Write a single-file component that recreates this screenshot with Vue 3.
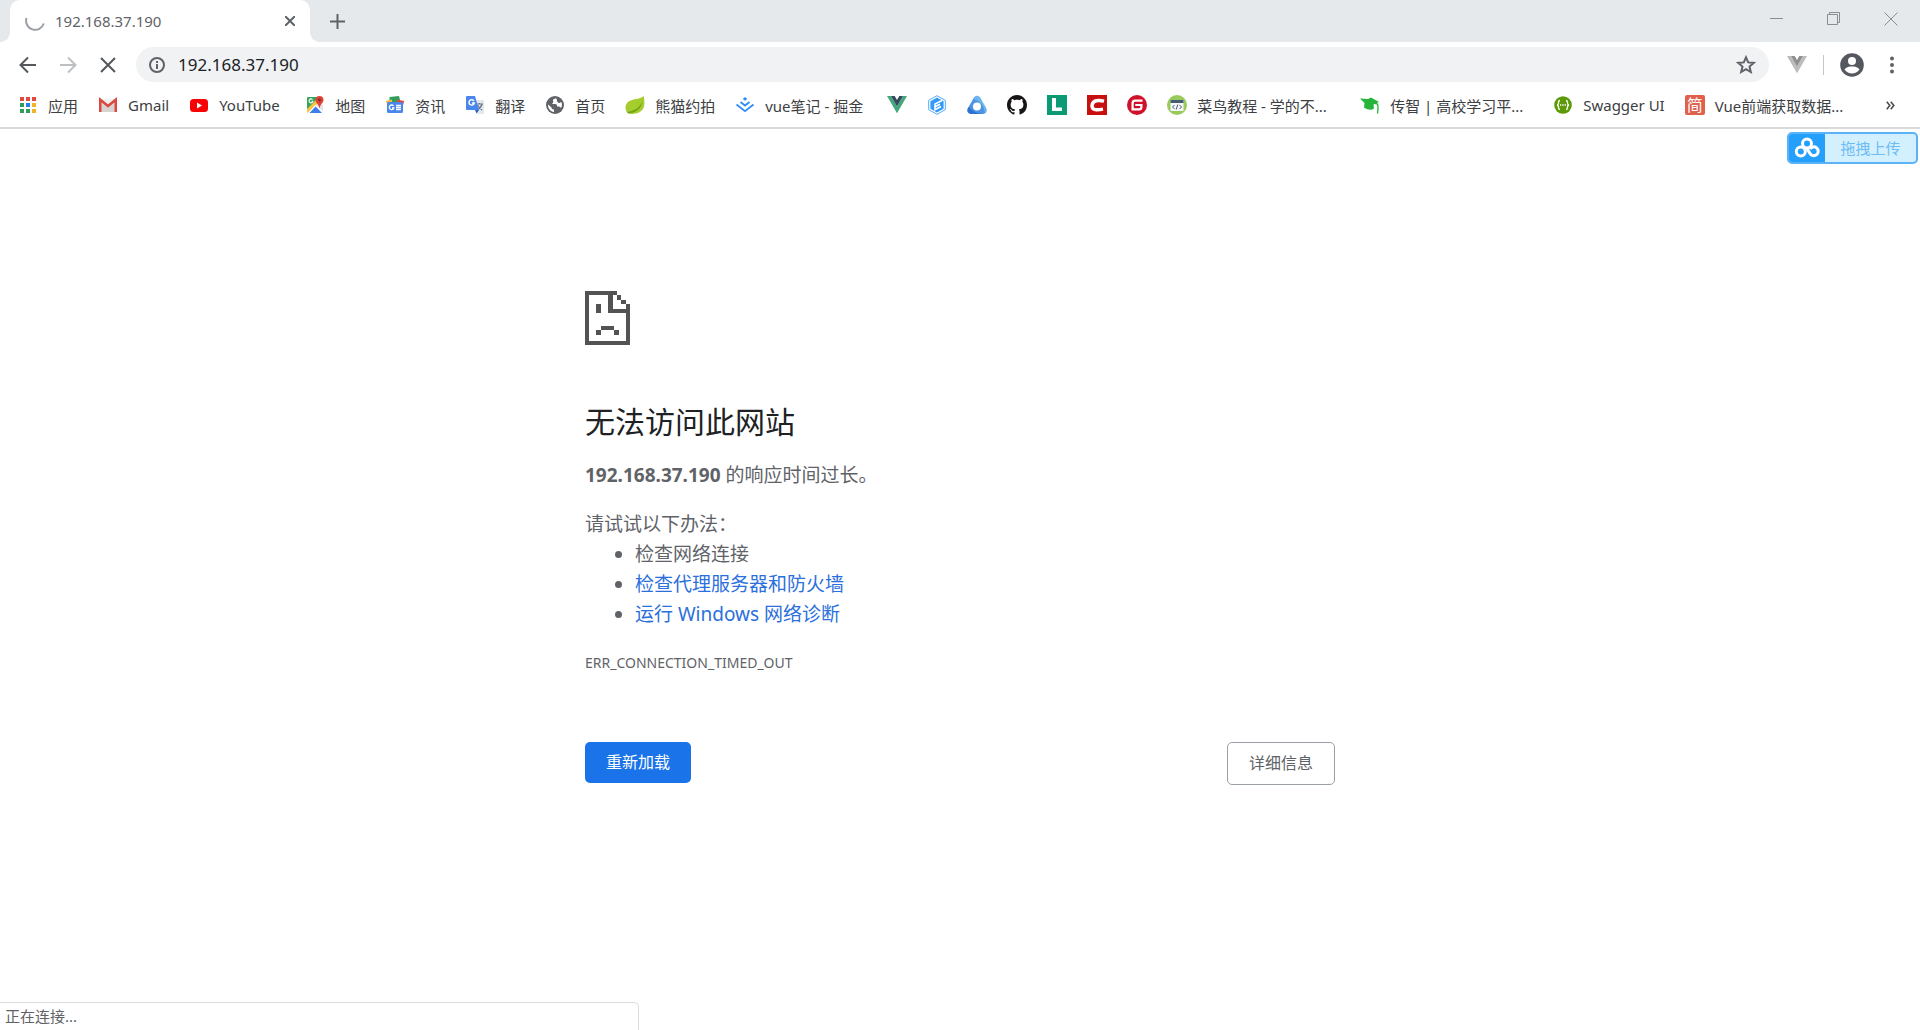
<script setup>
import { ref } from 'vue'

const address = ref('192.168.37.190')
</script>

<template>
  <div class="browser">
    <header class="chrome">
      <div class="tab-strip">
        <div class="tab">
          <svg class="spinner" width="20" height="20" viewBox="0 0 20 20" fill="none" stroke="#9aa0a6" stroke-width="2"><path d="M1.500 7 A9 9 0 0 0 18.800 12.500" /></svg>
          <span class="tab-title">192.168.37.190</span>
          <button class="plain tab-close" aria-label="关闭标签页">
            <svg width="10" height="10" viewBox="0 0 10 10" stroke="#5f6368" stroke-width="2"><path d="M0 0L10 10M10 0L0 10" /></svg>
          </button>
        </div>
        <button class="plain new-tab" aria-label="新标签页">
          <svg width="15" height="15" viewBox="0 0 15 15" stroke="#5f6368" stroke-width="2"><path d="M7.5 0V15M0 7.5H15" /></svg>
        </button>
        <div class="window-controls">
          <button class="plain control" aria-label="最小化">
            <svg width="14" height="14" viewBox="0 0 14 14" stroke="#8a8d91" fill="none"><path d="M0 6.500H13" /></svg>
          </button>
          <button class="plain control" aria-label="还原">
            <svg width="14" height="14" viewBox="0 0 14 14" stroke="#8a8d91" fill="none"><path d="M.5 2.500H10.500V12.500H.5ZM2.500 2.500V.5H12.500V10.500H10.500" /></svg>
          </button>
          <button class="plain control" aria-label="关闭">
            <svg width="14" height="14" viewBox="0 0 14 14" stroke="#8a8d91" fill="none"><path d="M.5 .5L13.500 13.500M13.500 .5L.5 13.500" /></svg>
          </button>
        </div>
      </div>

      <div class="toolbar">
        <button class="plain nav" aria-label="后退">
          <svg width="18" height="18" viewBox="0 0 18 18" stroke="#55585c" stroke-width="2" fill="none"><path d="M17 9H2M9 1.500L1.500 9L9 16.500" /></svg>
        </button>
        <button class="plain nav" aria-label="前进">
          <svg width="18" height="18" viewBox="0 0 18 18" stroke="#bdc0c3" stroke-width="2" fill="none"><path d="M1 9H16M9 1.500L16.500 9L9 16.500" /></svg>
        </button>
        <button class="plain nav" aria-label="停止">
          <svg width="16" height="16" viewBox="0 0 16 16" stroke="#55585c" stroke-width="2" fill="none"><path d="M1 1L15 15M15 1L1 15" /></svg>
        </button>
        <div class="omnibox">
          <svg width="18" height="18" viewBox="0 0 18 18" fill="none" stroke="#5f6368" stroke-width="2"><circle cx="9" cy="9" r="7" /><path d="M9 8V13M9 5V7" /></svg>
          <input v-model="address" class="address" type="text" aria-label="地址" />
          <button class="plain" aria-label="收藏">
            <svg width="20" height="20" viewBox="0 0 20 20" fill="none" stroke="#5f6368" stroke-width="2"><path d="M10 2.300L12.200 7.400L17.700 7.900L13.500 11.600L14.800 17L10 14.100L5.200 17L6.500 11.600L2.300 7.900L7.800 7.400Z" /></svg>
          </button>
        </div>
        <button class="plain extension" aria-label="Vue.js devtools">
          <svg width="20" height="18" viewBox="0 0 20 18"><path fill="#bcbcbc" d="M0 0H4L10 10.400L16 0H20L10 17.300Z" /><path fill="#8f8f8f" d="M4 0H7.700L10 4L12.300 0H16L10 10.400Z" /></svg>
        </button>
        <span class="divider"></span>
        <button class="plain avatar" aria-label="用户">
          <svg width="24" height="24" viewBox="0 0 24 24"><circle cx="12" cy="12" r="11.800" fill="#55585e" /><circle cx="12" cy="8" r="4" fill="#fff" /><path fill="#fff" d="M4.500 16.500C6 14 9.500 13.500 12 13.500S18 14 19.500 16.500C17.500 19.300 15 20.500 12 20.500S6.500 19.300 4.500 16.500Z" /></svg>
        </button>
        <button class="plain menu" aria-label="菜单">
          <svg width="20" height="18" viewBox="0 0 20 18" fill="#5f6368"><circle cx="10" cy="2.500" r="2" /><circle cx="10" cy="9" r="2" /><circle cx="10" cy="15.500" r="2" /></svg>
        </button>
      </div>

      <nav class="bookmarks">
        <a class="bookmark" href="#">
          <svg width="20" height="20" viewBox="0 0 20 20"><path fill="#e04a3f" d="M2 2h4v4H2zM8 2h4v4H8zM14 2h4v4h-4z" /><path fill="#2f9e58" d="M2 8h4v4H2zM2 14h4v4H2z" /><path fill="#2a7fe8" d="M8 8h4v4H8z" /><path fill="#2f9e58" d="M8 14h4v4H8z" /><path fill="#f2b32c" d="M14 8h4v4h-4zM14 14h4v4h-4z" /></svg>
          <span>应用</span>
        </a>
        <a class="bookmark" href="#">
          <svg width="20" height="20" viewBox="0 0 20 20"><path fill="#f3f1f0" d="M1 4H19V17H1Z" /><path fill="#d8d4d2" d="M4 17V8L10 13L16 8V17Z" /><path fill="none" stroke="#d94a43" stroke-width="2.600" d="M2.300 17V4.800L10 11L17.700 4.800V17" /></svg>
          <span>Gmail</span>
        </a>
        <a class="bookmark" href="#">
          <svg width="20" height="20" viewBox="0 0 20 20"><rect x="1" y="4" width="18" height="13" rx="3.500" fill="#f80303" /><path fill="#fff" d="M8 7.500L13 10.500L8 13.500Z" /></svg>
          <span class="youtube">YouTube</span>
        </a>
        <a class="bookmark" href="#">
          <svg width="20" height="20" viewBox="0 0 20 20"><path fill="#35a35a" d="M3 2H14L3 16Q2 16 2 14V3Q2 2 3 2Z" /><path fill="#f6c544" d="M2 14L12 4L14 7L4 18H3Q2 18 2 16Z" /><path fill="#e2e4e6" d="M13 8L18 10V17Q18 18 17 17L10 11Z" /><path fill="#3f7ee8" d="M4 18L10.500 11L17 18Z" /><path stroke="#fff" stroke-width="1.200" d="M3.500 18L10.500 10.500L18 17.500" fill="none" /><path d="M7.500 4.500A2 2 0 1 0 8 6.200H6.500" fill="none" stroke="#fff" stroke-width="1.100" /><path fill="#df4438" d="M14.500 1a4 4 0 0 1 4 4C18.500 8 15.500 8.500 14.500 13.500C13.500 8.500 10.500 8 10.500 5a4 4 0 0 1 4-4Z" /><circle cx="14.500" cy="5" r="1.400" fill="#8c241d" /></svg>
          <span>地图</span>
        </a>
        <a class="bookmark" href="#">
          <svg width="20" height="20" viewBox="0 0 20 20"><path fill="#2f9e58" d="M4.500 2L14 1L15.500 7H4.500Z" /><path fill="#f3bd3c" d="M.8 6L7 4.500V10H2.500Z" /><path fill="#e04a3f" d="M12 4.500L19.200 6L17.500 12H12Z" /><rect x="2" y="7" width="16" height="11" rx="1.500" fill="#4a86ec" /><path fill="none" stroke="#fff" stroke-width="1.300" d="M8.500 11A2.300 2.300 0 1 0 8.800 13H7M11 10.500H16M11 12.500H16M11 14.500H16" /></svg>
          <span>资讯</span>
        </a>
        <a class="bookmark" href="#">
          <svg width="20" height="20" viewBox="0 0 20 20"><path fill="#e3e6ea" d="M9 5H18Q19 5 19 6V18Q19 19 18 19H12Z" /><path fill="none" stroke="#66788c" stroke-width="1.200" d="M11 9H18M14.500 8V9M17 9Q16 13 12 15M12.500 10Q14 13 17 15" /><path fill="#4a86ec" d="M2 1H10L14 15H2Q1 15 1 14V2Q1 1 2 1Z" /><path fill="#2c5dbd" d="M10 15H14L11.500 18.500Z" /><path fill="none" stroke="#fff" stroke-width="1.400" d="M9 6A2.700 2.700 0 1 0 9.300 8H7" /></svg>
          <span>翻译</span>
        </a>
        <a class="bookmark" href="#">
          <svg width="20" height="20" viewBox="0 0 20 20"><circle cx="10" cy="10" r="9" fill="#5f6368" /><path fill="#fff" d="M11 3.200C8 4 7.500 5 8.200 6.200C9 7.400 7 8 7.300 9H10C12 9 12.500 10.500 12 11.500H14C15 11.500 15.500 12.300 16 13C17.300 11 17.200 8.500 16.200 6.800C15.500 8 13.500 8.500 12.500 7C11.500 6 12.500 4.500 11 3.200ZM3 9.500C2.800 13.500 5.500 16.500 9 17V14.500C7 14.500 6.500 13.500 6.500 12.500Z" /></svg>
          <span>首页</span>
        </a>
        <a class="bookmark" href="#">
          <svg width="20" height="20" viewBox="0 0 20 20"><path fill="#a5cd2d" d="M18.500 1C15 5 7 3 2.500 7.500C-1 11.500 .5 17 3.500 18.500C8 19.500 15.500 19 18.500 13C20 9.500 19.500 4 18.500 1Z" /><path fill="#75a316" d="M2 17C9 16 15 13 18 5C16.500 13 12 18 3.500 18.500Z" /></svg>
          <span>熊猫约拍</span>
        </a>
        <a class="bookmark" href="#">
          <svg width="20" height="20" viewBox="0 0 20 20" fill="none" stroke="#2f8df5" stroke-width="1.800"><path d="M1.500 9.500L10 16.200L18.500 9.500M5.500 7L10 10.500L14.500 7" /><path fill="#2f8df5" stroke="none" d="M10 2L12.300 4L10 5.800L7.700 4Z" /></svg>
          <span class="juejin">vue笔记 - 掘金</span>
        </a>
        <a class="bookmark" href="#" aria-label="Vue.js">
          <svg width="20" height="20" viewBox="0 0 20 20"><path fill="#42a87e" d="M0 1H4L10 11.400L16 1H20L10 18.300Z" /><path fill="#35495e" d="M4 1H7.700L10 5L12.300 1H16L10 11.400Z" /></svg>
        </a>
        <a class="bookmark" href="#" aria-label="Element">
          <svg width="20" height="20" viewBox="0 0 20 20"><path fill="#fff" stroke="#58acf7" d="M10 .7L18.300 5.300V14.700L10 19.300L1.700 14.700V5.300Z" /><path fill="#339bf7" d="M10 2.600L16.600 6.200V13.800L10 17.400L3.400 13.800V6.200Z" /><path fill="none" stroke="#fff" stroke-width="1.600" d="M15 5.500L8 9V14.600L14 11.500M8 11.800L13 9.200" /></svg>
        </a>
        <a class="bookmark" href="#" aria-label="文档">
          <svg width="20" height="20" viewBox="0 0 20 20"><path fill="#4b94e4" d="M7 2.500Q10-1 13 2.500L19 13Q21 18 16 19H4Q-1 18 1 13Z" /><path fill="#7ac4ef" d="M10 .8Q12 1 13 2.500L19 13Q20.500 16 18 18Q16 6 6 4Q8 .8 10 .8Z" opacity=".7" /><path fill="#2e71ce" d="M2 12Q8 19 16 19H4Q-1 18 1 13Z" /><circle cx="10" cy="11.500" r="4" fill="#fff" /></svg>
        </a>
        <a class="bookmark" href="#" aria-label="GitHub">
          <svg width="20" height="20" viewBox="0 0 16 16"><path fill="#171515" d="M8 0C3.580 0 0 3.580 0 8c0 3.540 2.290 6.530 5.470 7.590.4.070.55-.17.55-.38 0-.19-.01-.82-.01-1.490-2.010.37-2.530-.49-2.690-.94-.09-.23-.48-.94-.82-1.130-.28-.15-.68-.52-.01-.53.63-.01 1.080.58 1.230.82.72 1.210 1.870.87 2.330.66.070-.52.280-.87.510-1.070-1.780-.2-3.640-.89-3.640-3.950 0-.87.310-1.590.820-2.150-.08-.2-.36-1.020.080-2.120 0 0 .67-.21 2.200.820.640-.18 1.320-.27 2-.27s1.360.09 2 .27c1.530-1.040 2.200-.82 2.200-.82.440 1.100.160 1.920.080 2.120.51.560.82 1.270.82 2.150 0 3.070-1.870 3.750-3.650 3.950.290.250.540.730.540 1.480 0 1.070-.01 1.930-.01 2.200 0 .21.150.46.550.38A8.010 8.010 0 0 0 16 8c0-4.420-3.580-8-8-8Z" /></svg>
        </a>
        <a class="bookmark" href="#" aria-label="LeetCode">
          <svg width="20" height="20" viewBox="0 0 20 20"><path fill="#0b9a74" d="M0 0H20V20H0Z" /><path fill="#fff" d="M5 3H9V12.500H15V16H5Z" /></svg>
        </a>
        <a class="bookmark" href="#" aria-label="CSDN">
          <svg width="20" height="20" viewBox="0 0 20 20"><path fill="#c80f0f" d="M0 0H20V20H0Z" /><path fill="none" stroke="#fff" stroke-width="3.400" d="M17 6.200C12 5 5.500 4.800 5 10.500C4.500 15.500 10.500 15.200 16 14.200" /></svg>
        </a>
        <a class="bookmark" href="#" aria-label="Gitee">
          <svg width="20" height="20" viewBox="0 0 20 20"><circle cx="10" cy="10" r="10" fill="#d0112b" /><path fill="none" stroke="#fff" stroke-width="2.200" d="M15.500 5.700H8Q5.600 5.700 5.600 8.200V14.400H12Q14.400 14.400 14.400 12V10H8.300" /></svg>
        </a>
        <a class="bookmark" href="#">
          <svg width="20" height="20" viewBox="0 0 20 20"><circle cx="10" cy="10" r="10" fill="#98cb5c" /><rect x="3.500" y="5" width="13" height="11" fill="#f4f6f8" /><path fill="#465a74" d="M3.500 5H16.500V8H3.500Z" /><path fill="none" stroke="#465a74" d="M7.500 10L5.500 12L7.500 14M12.500 10L14.500 12L12.500 14M10.800 9.500L9.200 14.500" /></svg>
          <span class="long">菜鸟教程 - 学的不...</span>
        </a>
        <a class="bookmark" href="#">
          <svg width="20" height="20" viewBox="0 0 20 20"><path fill="#27b43c" d="M0 3.500L8 4L11 2.500L19 7L13.500 9.500L14 13.500Q10 16.500 4 12.500L4.500 8Z" /><path fill="none" stroke="#27b43c" stroke-width="1.300" d="M12 7.500L17.500 9Q18.500 12 17.500 18.500" /></svg>
          <span class="long">传智 | 高校学习平...</span>
        </a>
        <a class="bookmark" href="#">
          <svg width="20" height="20" viewBox="0 0 20 20"><circle cx="10" cy="10" r="8.800" fill="#5c9a07" /><path fill="none" stroke="#fff" stroke-width="1.300" d="M7 5.500Q5.500 5.500 5.500 7.500Q5.500 10 4 10Q5.500 10 5.500 12.500Q5.500 14.500 7 14.500M13 5.500Q14.500 5.500 14.500 7.500Q14.500 10 16 10Q14.500 10 14.500 12.500Q14.500 14.500 13 14.500" /><path stroke="#fff" stroke-width="1.300" stroke-dasharray="1.300 1" d="M7 10H13" /></svg>
          <span>Swagger UI</span>
        </a>
        <a class="bookmark" href="#">
          <span class="jian" aria-hidden="true">简</span>
          <span class="long">Vue前端获取数据...</span>
        </a>
        <button class="plain overflow" aria-label="更多书签">
          <svg width="9" height="9" viewBox="0 0 9 9" fill="none" stroke="#4a4d51" stroke-width="1.600"><path d="M.8 .8L3.800 4.500L.8 8.200M4.800 .8L7.800 4.500L4.800 8.200" /></svg>
        </button>
      </nav>
    </header>

    <main class="page">
      <button class="plain upload">
        <span class="upload-logo">
          <svg width="26" height="22" viewBox="0 0 26 22" fill="none" stroke="#fff" stroke-width="3"><circle cx="13" cy="6.500" r="4.500" /><circle cx="6.800" cy="14.500" r="4.500" /><path d="M12.500 10.500L16 16.500A4.400 4.400 0 1 0 16 12" /></svg>
        </span>
        <span class="upload-text">拖拽上传</span>
      </button>

      <section class="error">
        <svg class="sad" width="45" height="54" viewBox="0 0 45 54" fill="#535353" shape-rendering="crispEdges"><path d="M0 0H32V4H28V18H45V54H0ZM4 4V50H41V22H23V4Z" fill-rule="evenodd" /><path fill="#fff" d="M32 0H45V13H41V18H28V4H32Z" /><path d="M32 4H36V9H32ZM36 9H41V13H36ZM41 13H45V18H41ZM11 13H16V22H11ZM16 35H29V39H16ZM11 39H16V44H11ZM29 39H34V44H29Z" /></svg>
        <h1>无法访问此网站</h1>
        <p class="summary"><strong>192.168.37.190</strong> 的响应时间过长。</p>
        <div class="suggestions">
          <p>请试试以下办法：</p>
          <ul>
            <li>检查网络连接</li>
            <li><a href="#">检查代理服务器和防火墙</a></li>
            <li><a href="#">运行 Windows 网络诊断</a></li>
          </ul>
        </div>
        <p class="code">ERR_CONNECTION_TIMED_OUT</p>
        <div class="actions">
          <button class="reload">重新加载</button>
          <button class="details">详细信息</button>
        </div>
      </section>
    </main>

    <div class="status" role="status">正在连接...</div>
  </div>
</template>

<style>
body {
  margin: 0;
  background: #fff;
}
</style>

<style scoped>
.browser {
  min-height: 100vh;
  background: #fff;
  color: #5f6368;
  font-family: "Noto Sans", "Noto Sans CJK SC", sans-serif;
  font-size: 15px;
}
svg {
  display: block;
  flex: none;
}
.plain {
  display: flex;
  align-items: center;
  justify-content: center;
  padding: 0;
  border: 0;
  background: none;
  font: inherit;
  color: inherit;
}
.tab-strip {
  display: flex;
  height: 42px;
  padding-left: 10px;
  background: #e6e9ec;
}
.tab {
  position: relative;
  display: flex;
  align-items: center;
  box-sizing: border-box;
  width: 300px;
  padding: 0 15px;
  border-radius: 10px 10px 0 0;
  background: #fff;
}
.tab::before,
.tab::after {
  content: "";
  position: absolute;
  bottom: 0;
  width: 10px;
  height: 10px;
}
.tab::before {
  left: -10px;
  background: radial-gradient(circle at 0 0, transparent 10px, #fff 10px);
}
.tab::after {
  right: -10px;
  background: radial-gradient(circle at 100% 0, transparent 10px, #fff 10px);
}
.tab-title {
  flex: 1;
  margin-left: 10px;
}
.new-tab {
  margin-left: 20px;
}
.window-controls {
  display: flex;
  gap: 43px;
  height: 38px;
  margin-left: auto;
  padding-right: 22px;
}
.toolbar {
  display: flex;
  align-items: center;
  padding: 5px 18px 5px 8px;
}
.nav {
  width: 40px;
  height: 35px;
}
.omnibox {
  display: flex;
  flex: 1;
  align-items: center;
  height: 35px;
  margin-left: 8px;
  padding: 0 13px 0 12px;
  box-sizing: border-box;
  border-radius: 18px;
  background: #f0f2f4;
}
.address {
  flex: 1;
  min-width: 0;
  margin: 0 12px;
  padding: 0;
  border: 0;
  outline: 0;
  background: none;
  color: #202124;
  font: inherit;
  font-size: 17px;
}
.extension {
  margin-left: 18px;
}
.divider {
  width: 1px;
  height: 20px;
  margin: 0 16px;
  background: #c4c7ca;
}
.menu {
  margin-left: 18px;
}
.bookmarks {
  display: flex;
  align-items: center;
  gap: 20px;
  height: 36px;
  padding: 0 25px 4px 18px;
  border-bottom: 2px solid #dadada;
  white-space: nowrap;
}
.bookmark {
  display: flex;
  align-items: center;
  gap: 10px;
  color: #3c4043;
  text-decoration: none;
}
.youtube {
  min-width: 66px;
}
.juejin {
  min-width: 102px;
}
.long {
  width: 143px;
}
.jian {
  width: 20px;
  border-radius: 2px;
  background: #e0604c;
  color: #fff;
  font-size: 16px;
  line-height: 20px;
  text-align: center;
}
.overflow {
  margin-left: auto;
}
.page {
  position: relative;
  padding: 162px 24px 48px;
}
.upload {
  position: absolute;
  top: 3px;
  right: 2px;
  box-sizing: border-box;
  width: 131px;
  height: 32px;
  align-items: stretch;
  overflow: hidden;
  border: 2px solid #5cb2f8;
  border-radius: 5px;
  background: #d2f0fe;
}
.upload-logo {
  display: flex;
  align-items: center;
  justify-content: center;
  width: 36px;
  background: #259ffc;
}
.upload-text {
  flex: 1;
  color: #6fbcf3;
  line-height: 28px;
}
.error {
  max-width: 750px;
  margin: 0 auto;
  font-size: 19px;
  line-height: 30px;
}
h1 {
  margin: 58px 0 19px;
  color: #202124;
  font-size: 30px;
  font-weight: 400;
  line-height: 38px;
}
p {
  margin: 0;
}
.suggestions {
  margin-top: 19px;
}
ul {
  margin: 0;
  padding-left: 50px;
}
li a {
  color: #2b6fdc;
  text-decoration: none;
}
.error .code {
  margin-top: 19px;
  font-size: 14px;
}
.actions {
  display: flex;
  align-items: flex-start;
  justify-content: space-between;
  margin-top: 64px;
}
.reload,
.details {
  padding: 0 21px;
  border: 0;
  border-radius: 5px;
  font: inherit;
  font-size: 16px;
  line-height: 41px;
}
.reload {
  background: #1a73e8;
  color: #fff;
}
.details {
  border: 1px solid #9aa0a6;
  background: #fff;
  color: #5f6368;
}
.status {
  position: fixed;
  bottom: 0;
  left: 0;
  box-sizing: border-box;
  width: 33.3vw;
  padding-left: 5px;
  border: 1px solid #dadce0;
  border-width: 1px 1px 0 0;
  border-radius: 0 5px 0 0;
  background: #fff;
  line-height: 27px;
}
</style>
